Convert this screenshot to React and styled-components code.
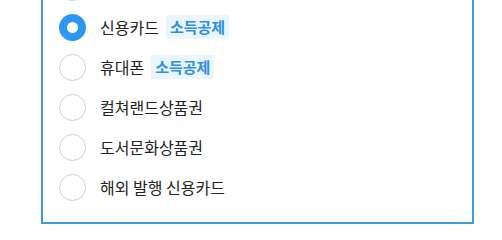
import React, { useState } from "react";
import styled, { createGlobalStyle } from "styled-components";

const GlobalStyle = createGlobalStyle`
    html, body {
        margin: 0;
        padding: 0;
        background: #fff;
    }
    body {
        font-family: "Noto Sans CJK KR", "Noto Sans", sans-serif;
        color: #222;
    }
`;

const options = [
    { id: "bank", label: "" },
    { id: "card", label: "신용카드", badge: "소득공제" },
    { id: "phone", label: "휴대폰", badge: "소득공제" },
    { id: "culture", label: "컬쳐랜드상품권" },
    { id: "book", label: "도서문화상품권" },
    { id: "foreign", label: "해외 발행 신용카드" },
];

const App = () => {
    const [selected, setSelected] = useState("card");

    return (
        <>
            <GlobalStyle />
            <Box>
                {options.map(opt => (
                    <Row key={opt.id} onClick={() => setSelected(opt.id)}>
                        <Radio $checked={selected === opt.id} />
                        {opt.label && <Label>{opt.label}</Label>}
                        {opt.badge && <Badge>{opt.badge}</Badge>}
                    </Row>
                ))}
            </Box>
        </>
    );
};

export default App;

const Box = styled.div`
    box-sizing: border-box;
    width: 433px;
    margin: -50px 0 0 41px;
    padding: 15px 16px;
    border: 2px solid #3d9be0;
    display: flex;
    flex-direction: column;
`;

const Row = styled.div`
    height: 40px;
    display: flex;
    align-items: center;
    cursor: pointer;
`;

const Radio = styled.span`
    box-sizing: border-box;
    flex: none;
    width: 27px;
    height: 27px;
    border-radius: 50%;
    border: ${props => (props.$checked ? "8px solid #2d96f0" : "1px solid #cfcfcf")};
    background: #fff;
    margin-right: 14px;
`;

const Label = styled.span`
    font-size: 16px;
    line-height: 20px;
    color: #222;
`;

const Badge = styled.span`
    margin-left: 7px;
    padding: 2px 4px;
    font-size: 15px;
    line-height: 20px;
    font-weight: 700;
    color: #2b8fe6;
    background: #eaf5fe;
`;
